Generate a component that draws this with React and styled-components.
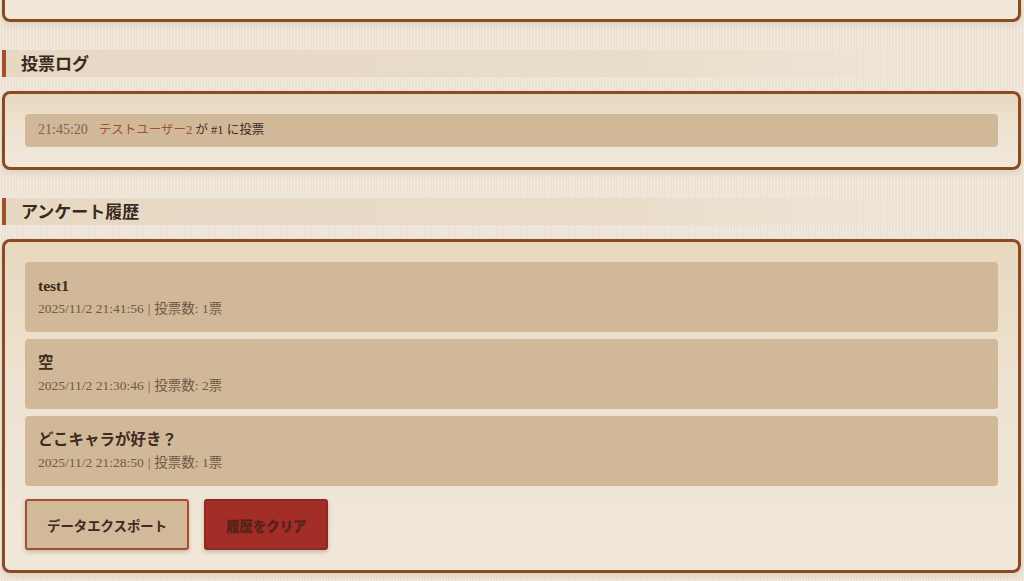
import React from "react";
import styled, { createGlobalStyle } from "styled-components";

const GlobalStyle = createGlobalStyle`
  html, body {
    margin: 0;
    padding: 0;
  }
  body {
    background-color: #f0e7d9;
    background-image: repeating-linear-gradient(
      90deg,
      rgba(255, 255, 255, 0.12) 0px,
      rgba(255, 255, 255, 0.12) 1px,
      rgba(160, 120, 80, 0.035) 1px,
      rgba(160, 120, 80, 0.035) 3px
    );
    font-family: "Liberation Serif", "Noto Sans CJK JP", serif;
    color: #3d2b1f;
  }
`;

const Page = styled.div`
  padding: 0 3px 8px 2px;
  display: flex;
  flex-direction: column;
`;

const Card = styled.section`
  border: 3px solid #8b4a24;
  border-radius: 8px;
  background: linear-gradient(180deg, #e7d9bf 0%, #eee3d2 45%, #f1e8da 100%);
  box-shadow: 0 3px 6px rgba(110, 70, 30, 0.12);
  padding: 20px;
  display: flex;
  flex-direction: column;
  gap: 7px;
`;

const TopCard = styled(Card)`
  border-top: none;
  border-radius: 0 0 8px 8px;
  height: 19px;
  padding: 0;
  background: #f1e8da;
`;

const SectionTitle = styled.h2`
  margin: 28px 0 14px;
  height: 27px;
  box-sizing: border-box;
  display: flex;
  align-items: center;
  padding: 0 0 3px 15px;
  border-left: 4px solid #a0522d;
  background: linear-gradient(90deg, #e6d8c3 0%, #e9dcc9 60%, rgba(240, 231, 217, 0) 90%);
  font-family: "Liberation Serif", "Noto Sans CJK JP", serif;
  font-size: 17px;
  font-weight: 700;
  color: #3a2a1e;
`;

const LogItem = styled.div`
  background: #d1b898;
  border-radius: 4px;
  padding: 7px 13px;
  height: 33px;
  box-sizing: border-box;
  font-size: 12.5px;
  line-height: 19px;
  color: #3d2b1f;
`;

const LogTime = styled.span`
  color: #7a6550;
  font-size: 14px;
  line-height: 1;
  margin-right: 11px;
`;

const LogUser = styled.span`
  color: #a0522d;
`;

const HistoryItem = styled.div`
  background: #d1b898;
  border-radius: 4px;
  padding: 13px 13px 14px;
  display: flex;
  flex-direction: column;
  gap: 3px;
`;

const HistoryTitle = styled.div`
  font-size: 15.5px;
  font-weight: 700;
  line-height: 22px;
  color: #3d2b1f;
`;

const HistoryMeta = styled.div`
  font-size: 13.5px;
  line-height: 18px;
  color: #6e5a46;
`;

const Sep = styled.span`
  margin: 0 4px;
`;

const Actions = styled.div`
  display: flex;
  gap: 15px;
  margin-top: 6px;
`;

const Button = styled.button`
  height: 51px;
  padding: 0 20px;
  border: 2px solid ${(p) => (p.$danger ? "#8f2a22" : "#a0522d")};
  border-radius: 3px;
  background: ${(p) => (p.$danger ? "#a32d27" : "#d2b99a")};
  color: ${(p) => (p.$danger ? "#4e2418" : "#3d2b1f")};
  text-shadow: ${(p) => (p.$danger ? "0 1px 1px rgba(60, 20, 10, 0.35)" : "none")};
  font-family: "Liberation Serif", "Noto Sans CJK JP", serif;
  font-size: 13.4px;
  font-weight: 700;
  box-shadow: 0 2px 4px rgba(80, 40, 10, 0.25);
  cursor: pointer;
`;

const history = [
  { title: "test1", date: "2025/11/2 21:41:56", votes: 1 },
  { title: "空", date: "2025/11/2 21:30:46", votes: 2 },
  { title: "どこキャラが好き？", date: "2025/11/2 21:28:50", votes: 1 },
];

export default function App() {
  return (
    <>
      <GlobalStyle />
      <Page>
        <TopCard />

        <SectionTitle>投票ログ</SectionTitle>
        <Card>
          <LogItem>
            <LogTime>21:45:20</LogTime>
            <LogUser>テストユーザー2</LogUser> が #1 に投票
          </LogItem>
        </Card>

        <SectionTitle>アンケート履歴</SectionTitle>
        <Card>
          {history.map((h) => (
            <HistoryItem key={h.date}>
              <HistoryTitle>{h.title}</HistoryTitle>
              <HistoryMeta>
                {h.date}
                <Sep>|</Sep>
                投票数: {h.votes}票
              </HistoryMeta>
            </HistoryItem>
          ))}
          <Actions>
            <Button>データエクスポート</Button>
            <Button $danger>履歴をクリア</Button>
          </Actions>
        </Card>
      </Page>
    </>
  );
}
